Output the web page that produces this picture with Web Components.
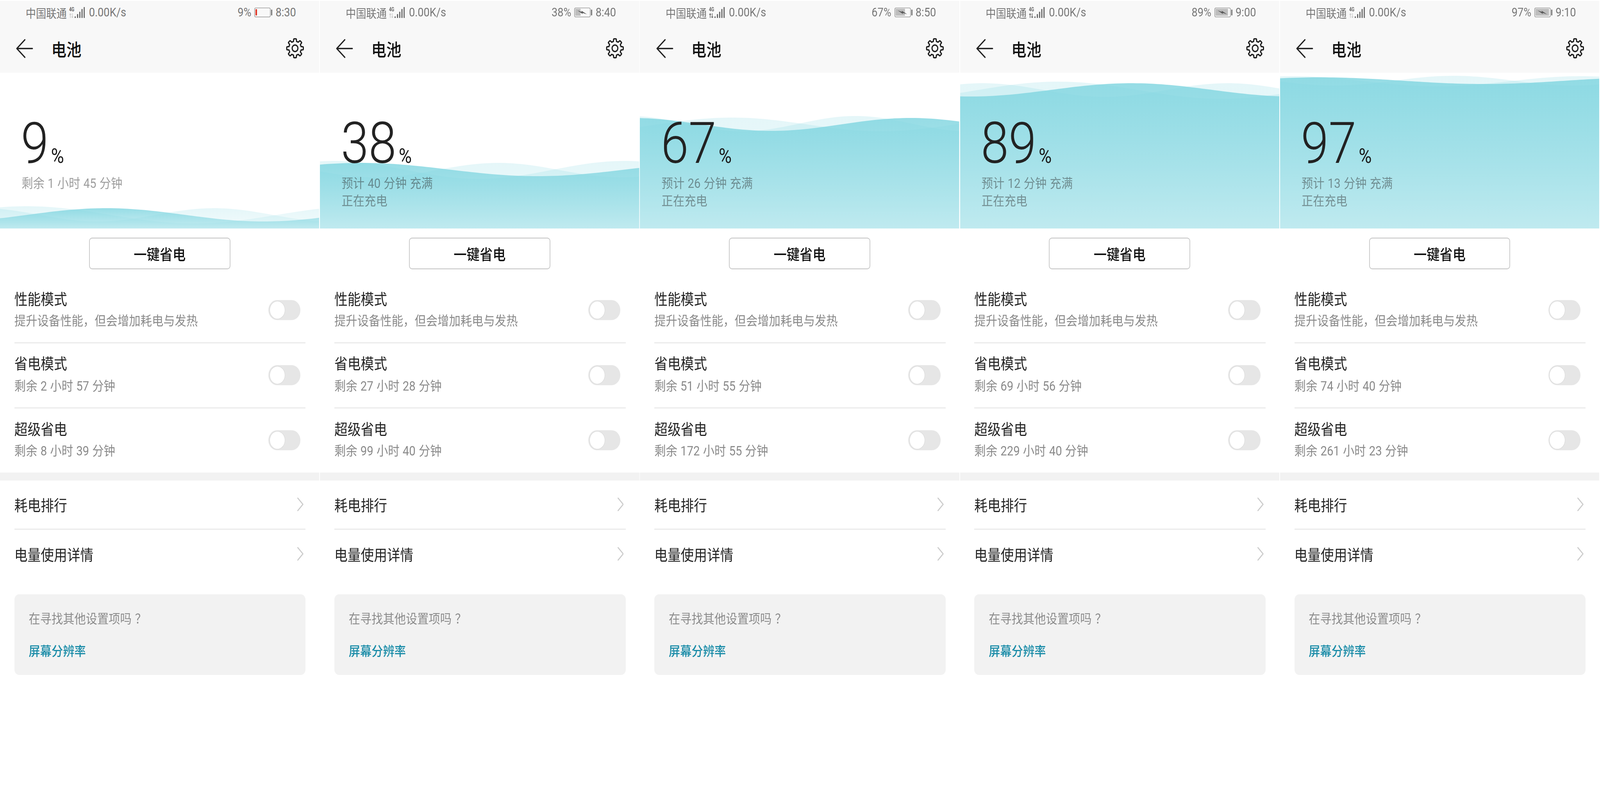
<!DOCTYPE html>
<html lang="zh-CN">
<head>
<meta charset="utf-8">
<title>电池</title>
<style>
  html, body { margin: 0; background: #fff; overflow: hidden; }
  body { font-family: Roboto, "Noto Sans CJK SC", sans-serif; }
</style>
</head>
<body>
<battery-strip></battery-strip>
<script>
/* data of the five screenshots; wave = [peakX, period, top, bottom] */
const SCREENS = [
  { level: 9, time: '8:30', activity: false, lines: ['剩余 1 小时 45 分钟'],
    modes: ['剩余 2 小时 57 分钟', '剩余 8 小时 39 分钟'],
    waves: [[78, 976, 342, 386], [626, 680, 347, 381], [310, 920, 347, 381]] },
  { level: 38, time: '8:40', activity: false, lines: ['预计 40 分钟 充满', '正在充电'],
    modes: ['剩余 27 小时 28 分钟', '剩余 99 小时 40 分钟'],
    waves: [[40, 850, 226, 272], [521, 720, 231, 268], [120, 1030, 231, 265]] },
  { level: 67, time: '8:50', activity: true, lines: ['预计 26 分钟 充满', '正在充电'],
    modes: ['剩余 51 小时 55 分钟', '剩余 172 小时 55 分钟'],
    waves: [[270, 870, 115, 150], [630, 660, 111, 150], [791, 814, 116, 149]] },
  { level: 89, time: '9:00', activity: true, lines: ['预计 12 分钟 充满', '正在充电'],
    modes: ['剩余 69 小时 56 分钟', '剩余 229 小时 40 分钟'],
    waves: [[286, 954, 23, 67], [66, 715, 27, 62], [501, 940, 27, 61]] },
  { level: 97, time: '9:10', activity: false, lines: ['预计 13 分钟 充满', '正在充电'],
    modes: ['剩余 74 小时 40 分钟', '剩余 261 小时 23 分钟'],
    waves: [[40, 840, 9, 35], [507, 700, 8, 33], [117, 958, 12, 29]] },
];

class StatusBar extends HTMLElement {
  connectedCallback() {
    const level = Number(this.getAttribute('level'));
    const arrows = this.hasAttribute('activity') ? '#666' : '#ccc';
    const low = level < 20;
    const fill = low
      ? '<rect x="3.4" y="4" width="4.6" height="16" rx="1" fill="#e03a2b"/>'
      : `<rect x="3" y="3" width="${Math.max(14, level * 0.41)}" height="18" fill="#bdbdbd"/>
         <path d="M9 7l13 4-1-3 16 9-13-3.500 1 3z" fill="#555"/>`;
    this.attachShadow({ mode: 'open' }).innerHTML = `
      <style>
        :host {
          display: flex;
          align-items: center;
          height: 60px;
          padding: 0 68px 0 75px;
          font-size: 31px;
          color: #777;
        }
        .carrier { font-size: 30px; }
        .signal { margin: 0 12px 0 7px; display: block; }
        .right { margin-left: auto; display: flex; align-items: center; gap: 9px; }
        svg { display: block; }
      </style>
      <span class="carrier">中国联通</span>
      <svg class="signal" width="46" height="30" viewBox="0 0 46 30">
        <text x="0" y="12" font-family="Roboto" font-weight="700" font-size="14" textLength="15" lengthAdjust="spacingAndGlyphs" fill="#666">4G</text>
        <path d="M3.500 29V18M1 20.500l2.500-2.500 2.500 2.500M9.500 17v11M7 25.500l2.500 2.500 2.500-2.500" fill="none" stroke="${arrows}" stroke-width="1.800"/>
        <g fill="#666">
          <rect x="16" y="25" width="3.400" height="4" rx="1"/>
          <rect x="23" y="19" width="3.400" height="10" rx="1"/>
          <rect x="29.500" y="13" width="3.400" height="16" rx="1"/>
          <rect x="36" y="6" width="3.400" height="23" rx="1"/>
          <rect x="42.500" y="1" width="3.400" height="28" rx="1"/>
        </g>
      </svg>
      <span>0.00K/s</span>
      <span class="right">
        <span>${level}%</span>
        <svg width="53" height="26" viewBox="0 0 53 26">
          ${fill}
          <rect x=".8" y=".8" width="46" height="23.400" rx="3.500" fill="none" stroke="#8c8c8c" stroke-width="1.500"/>
          <rect x="49" y="5" width="3.500" height="15" rx="1" fill="#777"/>
        </svg>
        <span>${this.getAttribute('time')}</span>
      </span>
    `;
  }
}

class AppBar extends HTMLElement {
  connectedCallback() {
    // 8 rounded teeth, one of them on top
    const pts = [];
    for (let i = 0; i < 240; i++) {
      const a = i / 240 * Math.PI * 2;
      const s = Math.min(1, Math.max(0, Math.cos(a * 8) * 1.1 + 0.5));
      const r = 18 + 6.2 * s * s * (3 - 2 * s);
      pts.push((30 + r * Math.sin(a)).toFixed(2) + ' ' + (30 - r * Math.cos(a)).toFixed(2));
    }
    this.attachShadow({ mode: 'open' }).innerHTML = `
      <style>
        :host {
          display: flex;
          align-items: center;
          height: 124px;
          padding: 0 41px 0 46px;
        }
        h1 {
          margin: 0 0 0 50px;
          font-size: 44px;
          font-weight: 500;
          color: #111;
        }
        svg { display: block; }
        .gear { margin-left: auto; }
      </style>
      <svg width="54" height="50" viewBox="0 0 54 50">
        <path d="M27 2.500L3.500 25 27 47.500M3.500 25H49" fill="none" stroke="#222" stroke-width="3.400" stroke-linecap="round" stroke-linejoin="round"/>
      </svg>
      <h1><slot></slot></h1>
      <svg class="gear" width="60" height="60" viewBox="0 0 60 60">
        <path d="M${pts.join('L')}Z" fill="none" stroke="#1c1c1c" stroke-width="3.400" stroke-linejoin="round"/>
        <circle cx="30" cy="30" r="8.400" fill="none" stroke="#1c1c1c" stroke-width="3.400"/>
      </svg>
    `;
  }
}

class BatteryWave extends HTMLElement {
  curve([peak, period, top, bottom]) {
    const mid = (top + bottom) / 2, amp = (bottom - top) / 2;
    let d = 'M0 399';
    for (let x = 0; x <= 933; x += 12) {
      d += `L${x} ${(mid - amp * Math.cos((x - peak) / period * Math.PI * 2)).toFixed(2)}`;
    }
    return d + `L933 ${(mid - amp * Math.cos((933 - peak) / period * Math.PI * 2)).toFixed(2)}L933 399Z`;
  }

  connectedCallback() {
    const waves = JSON.parse(this.getAttribute('waves'));
    this.attachShadow({ mode: 'open' }).innerHTML = `
      <style>
        :host { display: block; position: absolute; inset: 0; }
        svg { display: block; width: 100%; height: 100%; }
      </style>
      <svg viewBox="0 0 933 399" preserveAspectRatio="none">
        <defs>
          <linearGradient id="back" x1="0" y1="0" x2="0" y2="1">
            <stop offset="0" stop-color="#7cd4df" stop-opacity=".2"/>
            <stop offset="1" stop-color="#7cd4df" stop-opacity=".09"/>
          </linearGradient>
          <linearGradient id="front" x1="0" y1="0" x2="0" y2="1">
            <stop offset="0" stop-color="#7cd4df" stop-opacity=".8"/>
            <stop offset="1" stop-color="#7cd4df" stop-opacity=".38"/>
          </linearGradient>
        </defs>
        <path d="${this.curve(waves[0])}" fill="url(#back)"/>
        <path d="${this.curve(waves[1])}" fill="url(#back)"/>
        <path d="${this.curve(waves[2])}" fill="url(#front)"/>
      </svg>
    `;
  }
}

class BatteryHero extends HTMLElement {
  connectedCallback() {
    const lines = JSON.parse(this.getAttribute('lines'));
    this.attachShadow({ mode: 'open' }).innerHTML = `
      <style>
        :host {
          display: block;
          position: relative;
          height: 399px;
          box-sizing: border-box;
          padding: 109px 0 0 63px;
          background: #fff;
        }
        .body { position: relative; }
        .level { display: flex; align-items: baseline; height: 146px; line-height: 146px; color: #222; }
        .num { font-size: 146px; font-weight: 300; margin-left: -2px; }
        .pct { font-size: 52px; margin-left: 7px; font-weight: 400; color: #1a1a1a; }
        .lines { margin-top: 5px; font-size: 33.500px; word-spacing: 1px; line-height: 46px; color: rgba(40, 40, 40, .46); }
      </style>
      <battery-wave waves='${this.getAttribute('waves')}'></battery-wave>
      <div class="body">
        <div class="level"><span class="num">${this.getAttribute('level')}</span><span class="pct">%</span></div>
        <div class="lines">${lines.map(l => `<div>${l}</div>`).join('')}</div>
      </div>
    `;
  }
}

class SaveButton extends HTMLElement {
  connectedCallback() {
    this.attachShadow({ mode: 'open' }).innerHTML = `
      <style>
        :host {
          display: flex;
          align-items: center;
          justify-content: center;
          box-sizing: border-box;
          width: 413px;
          height: 81px;
          margin: 23px auto;
          border: 2.500px solid #ccc;
          border-radius: 9px;
          font-size: 38px;
          font-weight: 500;
          color: #111;
        }
      </style>
      <slot></slot>
    `;
  }
}

class ToggleSwitch extends HTMLElement {
  connectedCallback() {
    this.attachShadow({ mode: 'open' }).innerHTML = `
      <style>
        :host {
          display: block;
          box-sizing: border-box;
          width: 94px;
          height: 51px;
          padding: 2px 3px;
          border-radius: 26px;
          background: #e6e6e6;
        }
        div {
          box-sizing: border-box;
          width: 46px;
          height: 47px;
          border-radius: 50%;
          background: #fff;
          border: 1.500px solid #d8d8d8;
        }
      </style>
      <div></div>
    `;
  }
}

class SettingRow extends HTMLElement {
  connectedCallback() {
    this.attachShadow({ mode: 'open' }).innerHTML = `
      <style>
        :host {
          display: flex;
          align-items: center;
          justify-content: space-between;
          box-sizing: border-box;
          height: 166.500px;
          margin: 0 40px 0 42px;
          padding-right: 15px;
          border-bottom: 2.500px solid #e6e6e6;
        }
        :host([last]) { height: 165px; border-bottom: 0; }
        .title { font-size: 38.500px; line-height: 55px; color: #222; }
        .sub { font-size: 33.500px; word-spacing: 1px; line-height: 55px; color: #8a8a8a; }
      </style>
      <div>
        <div class="title"><slot></slot></div>
        <div class="sub"><slot name="sub"></slot></div>
      </div>
      <toggle-switch></toggle-switch>
    `;
  }
}

class NavRow extends HTMLElement {
  connectedCallback() {
    this.attachShadow({ mode: 'open' }).innerHTML = `
      <style>
        :host {
          display: flex;
          align-items: center;
          justify-content: space-between;
          box-sizing: border-box;
          height: 124px;
          margin: 0 40px 0 42px;
          padding-right: 6px;
          font-size: 38.500px;
          color: #222;
        }
        :host([divided]) { height: 126px; border-bottom: 2.500px solid #e6e6e6; }
        svg { display: block; }
      </style>
      <span><slot></slot></span>
      <svg width="18" height="35" viewBox="0 0 18 35">
        <path d="M1.500 1.500L16.500 17.500 1.500 33.500" fill="none" stroke="#ccc" stroke-width="3" stroke-linecap="round" stroke-linejoin="round"/>
      </svg>
    `;
  }
}

class HintCard extends HTMLElement {
  connectedCallback() {
    this.attachShadow({ mode: 'open' }).innerHTML = `
      <style>
        :host {
          display: block;
          box-sizing: border-box;
          height: 207px;
          margin: 41px 40px 0 42px;
          padding: 40px 42px 0;
          border-radius: 14px;
          background: #f2f2f2;
          font-size: 33.400px;
          line-height: 46px;
        }
        .question { color: #8c8c8c; }
        .link { margin-top: 38px; color: #1a8ca8; font-weight: 500; }
      </style>
      <div class="question"><slot></slot></div>
      <div class="link"><slot name="link"></slot></div>
    `;
  }
}

class BatteryScreen extends HTMLElement {
  connectedCallback() {
    const s = SCREENS[Number(this.getAttribute('index'))];
    this.attachShadow({ mode: 'open' }).innerHTML = `
      <style>
        :host {
          display: block;
          box-sizing: border-box;
          padding: 2px 2px 0 0;
          height: 2020px;
          font-family: Roboto, "Noto Sans CJK SC", sans-serif;
        }
        header { background: #f8f8f8; }
        .band { height: 20px; background: #f2f2f2; }
        .mark { margin-left: 10px; }
      </style>
      <header>
        <status-bar level="${s.level}" time="${s.time}" ${s.activity ? 'activity' : ''}></status-bar>
        <app-bar>电池</app-bar>
      </header>
      <battery-hero level="${s.level}" lines='${JSON.stringify(s.lines)}' waves='${JSON.stringify(s.waves)}'></battery-hero>
      <save-button>一键省电</save-button>
      <setting-row>性能模式<span slot="sub">提升设备性能，但会增加耗电与发热</span></setting-row>
      <setting-row>省电模式<span slot="sub">${s.modes[0]}</span></setting-row>
      <setting-row last>超级省电<span slot="sub">${s.modes[1]}</span></setting-row>
      <div class="band"></div>
      <nav-row divided>耗电排行</nav-row>
      <nav-row>电量使用详情</nav-row>
      <hint-card>在寻找其他设置项吗<span class="mark">？</span><span slot="link">屏幕分辨率</span></hint-card>
    `;
  }
}

// the five shots are a 4675px wide strip; the window can be narrower, so
// zoom the strip down to its width and stretch the height back
class BatteryStrip extends HTMLElement {
  connectedCallback() {
    const fit = Math.min(1, innerWidth / 4675);
    this.attachShadow({ mode: 'open' }).innerHTML = `
      <style>
        :host {
          display: grid;
          grid-template-columns: repeat(5, 935px);
          width: 4675px;
          zoom: ${fit};
          transform: scaleY(${1 / fit});
          transform-origin: 0 0;
        }
      </style>
      ${SCREENS.map((_, i) => `<battery-screen index="${i}"></battery-screen>`).join('')}
    `;
  }
}

customElements.define('status-bar', StatusBar);
customElements.define('app-bar', AppBar);
customElements.define('battery-wave', BatteryWave);
customElements.define('battery-hero', BatteryHero);
customElements.define('save-button', SaveButton);
customElements.define('toggle-switch', ToggleSwitch);
customElements.define('setting-row', SettingRow);
customElements.define('nav-row', NavRow);
customElements.define('hint-card', HintCard);
customElements.define('battery-screen', BatteryScreen);
customElements.define('battery-strip', BatteryStrip);
</script>
</body>
</html>
